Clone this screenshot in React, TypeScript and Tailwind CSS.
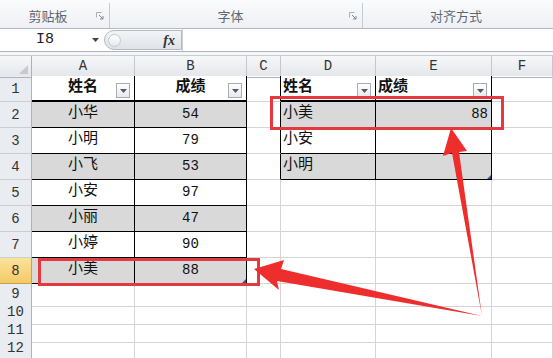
import React from "react"

const MONO = "font-['Liberation_Mono','Noto_Sans_CJK_SC',monospace]"
const CJK = "font-['Noto_Sans_CJK_SC',sans-serif]"

const LEFT: [string, string][] = [
  ["小华", "54"], ["小明", "79"], ["小飞", "53"], ["小安", "97"],
  ["小丽", "47"], ["小婷", "90"], ["小美", "88"],
]
const RIGHT: [string, string][] = [["小美", "88"], ["小安", ""], ["小明", ""]]
const COLS = ["A", "B", "C", "D", "E", "F"]
const GRID = "grid grid-cols-[32px_103px_112px_34px_95px_116px_1fr]"

function Launcher() {
  return (
    <svg width="8" height="8" viewBox="0 0 8 8" className="shrink-0">
      <path d="M0.5 0.5h5M0.5 0.5v5" stroke="#a9b0ba" fill="none" />
      <path d="M3 3l4 4M7 4v3H4" stroke="#7d8794" fill="none" />
    </svg>
  )
}

function FilterBtn() {
  return (
    <span className="absolute right-[4px] top-[7px] w-[14px] h-[15px] border border-[#a8aeb6] bg-gradient-to-b from-white to-[#e6e9ed] flex items-center justify-center">
      <svg width="7" height="4" viewBox="0 0 7 4">
        <path d="M0 0h7L3.5 4z" fill="#555b63" />
      </svg>
    </span>
  )
}

function Handle() {
  return (
    <svg width="4" height="4" viewBox="0 0 4 4" className="absolute right-0 bottom-0">
      <path d="M4 0v4H0z" fill="#3d4f8f" />
    </svg>
  )
}

function Row({ r }: { r: number }) {
  const h = r <= 8 ? "h-[26px]" : "h-[18px]"
  const gray = "border-r border-b border-r-[#d4d4d4] border-b-[#d4d4d4]"
  const head = r === 8
    ? "bg-gradient-to-b from-[#fbe29a] to-[#f5c967] border-r-[#c8a24a] border-b-[#c8a24a]"
    : "bg-[#e9ecf1] border-r-[#aab2bd] border-b-[#c9ced6]"

  // left table A1:B8
  let a: React.ReactNode = null
  let b: React.ReactNode = null
  let aCls = gray
  let bCls = gray
  if (r <= 8) {
    const fill = r === 1 ? "bg-white" : r % 2 === 0 ? "bg-[#d9d9d9]" : "bg-white"
    const bottom = r === 1 ? "border-b-2 border-b-black" : "border-b border-b-black"
    aCls = `border-r border-r-black ${bottom} ${fill}`
    bCls = `border-r border-r-black ${bottom} ${fill}`
    if (r === 1) {
      a = <><span className="font-bold text-[15px]">姓名</span><FilterBtn /></>
      b = <><span className="font-bold text-[15px]">成绩</span><FilterBtn /></>
    } else {
      a = <span className="text-[15px]">{LEFT[r - 2][0]}</span>
      b = <span className="text-[14px]">{LEFT[r - 2][1]}</span>
    }
  }

  // right table D1:E4
  let d: React.ReactNode = null
  let e: React.ReactNode = null
  let cCls = gray
  let dCls = gray
  let eCls = gray
  if (r <= 4) {
    const fill = r === 1 ? "bg-white" : r % 2 === 0 ? "bg-[#d9d9d9]" : "bg-white"
    const bottom = r === 1 ? "border-b-2 border-b-black" : "border-b border-b-black"
    cCls = "border-r border-b border-r-black border-b-[#d4d4d4]"
    dCls = `border-r border-r-black ${bottom} ${fill}`
    eCls = `border-r border-r-black ${bottom} ${fill} ${r === 1 ? "justify-start pl-[2px]" : "justify-end pr-[3px]"}`
    if (r === 1) {
      d = <><span className="font-bold text-[15px]">姓名</span><FilterBtn /></>
      e = <><span className="font-bold text-[15px]">成绩</span><FilterBtn /></>
    } else {
      d = <span className="text-[15px]">{RIGHT[r - 2][0]}</span>
      e = <span className="text-[14px]">{RIGHT[r - 2][1]}</span>
    }
  }

  return (
    <div className={`${GRID} ${h}`}>
      <div className={`flex items-end justify-center pb-[1px] border-r border-b text-[14px] text-[#333] ${head}`}>{r}</div>
      <div className={`relative flex items-center justify-center text-[#111] ${aCls}`}>{a}</div>
      <div className={`relative flex items-center justify-center text-[#111] ${bCls}`}>
        {b}
        {r === 8 && <Handle />}
      </div>
      <div className={cCls} />
      <div className={`relative flex items-center pl-[2px] text-[#111] ${dCls}`}>{d}</div>
      <div className={`relative flex items-center text-[#111] ${eCls}`}>
        {e}
        {r === 4 && <Handle />}
      </div>
      <div className={gray} />
    </div>
  )
}

export default function App() {
  return (
    <div className={`relative w-[553px] h-[358px] overflow-hidden bg-white ${MONO}`}>
      {/* ribbon group labels */}
      <div className={`flex h-[29px] border-b border-[#b3bac4] bg-gradient-to-b from-[#fafbfc] to-[#eef0f4] text-[13px] text-[#5d6773] pt-[3px] ${CJK}`}>
        <div className="w-[110px] flex items-center border-r border-[#c5cbd3] pr-[5px]">
          <span className="flex-1 text-center">剪贴板</span>
          <Launcher />
        </div>
        <div className="w-[253px] flex items-center border-r border-[#c5cbd3] pr-[5px]">
          <span className="flex-1 text-center pl-[2px]">字体</span>
          <Launcher />
        </div>
        <div className="flex-1 flex items-center justify-center pr-[4px]">对齐方式</div>
      </div>

      {/* formula bar */}
      <div className="flex h-[23px] items-center bg-white border-b border-[#aeb5bf]">
        <div className="w-[104px] flex items-center h-full">
          <span className="pl-[36px] text-[15px] text-[#222]">I8</span>
          <svg width="7" height="4" viewBox="0 0 7 4" className="ml-auto mr-[5px]">
            <path d="M0 0h7L3.5 4z" fill="#444" />
          </svg>
        </div>
        <div className="w-[78px] h-[20px] rounded-l-full border border-[#b4bac3] bg-gradient-to-b from-[#f3f4f6] to-[#dfe2e7] flex items-center pl-[3px] pr-[6px]">
          <span className="w-[13px] h-[13px] rounded-full border border-[#c4c9d0] bg-gradient-to-b from-white to-[#e5e8ec]" />
          <span className="ml-auto font-['Liberation_Serif',serif] italic font-bold text-[14px] text-[#333]">fx</span>
        </div>
        <div className="flex-1 h-full border-l border-[#c9ced5]" />
      </div>
      <div className="h-[4px] bg-[#f4f6f8] border-b border-[#c9ced6]" />

      {/* column headers */}
      <div className={`${GRID} h-[20px] bg-gradient-to-b from-[#f6f7f9] to-[#e4e7eb] text-[14px] text-[#333]`}>
        <div className="border-r border-b border-[#aab2bd] relative">
          <svg width="9" height="9" viewBox="0 0 9 9" className="absolute right-[3px] bottom-[3px]">
            <path d="M9 0v9H0z" fill="#c5cad1" />
          </svg>
        </div>
        {COLS.map((c) => (
          <div key={c} className="flex items-center justify-center border-r border-b border-r-[#c3c8cf] border-b-[#aab2bd]">{c}</div>
        ))}
      </div>

      {Array.from({ length: 12 }, (_, i) => <Row key={i} r={i + 1} />)}

      {/* red highlight boxes */}
      <div className="absolute left-[270px] top-[96px] w-[234px] h-[34px] border-[3px] border-[#e4393e]" />
      <div className="absolute left-[38px] top-[258px] w-[222px] h-[28px] border-[3px] border-[#e4393e]" />

      {/* arrows */}
      <svg className="absolute inset-0 pointer-events-none" width="553" height="358" viewBox="0 0 553 358">
        <polygon
          points="254,269 284,260 281,269 482,316 277,281 279,290"
          fill="#ee2d2d"
        />
        <polygon
          points="451,128 467,151 459,152 482,316 452,153 443,156"
          fill="#ee2d2d"
        />
      </svg>
    </div>
  )
}
